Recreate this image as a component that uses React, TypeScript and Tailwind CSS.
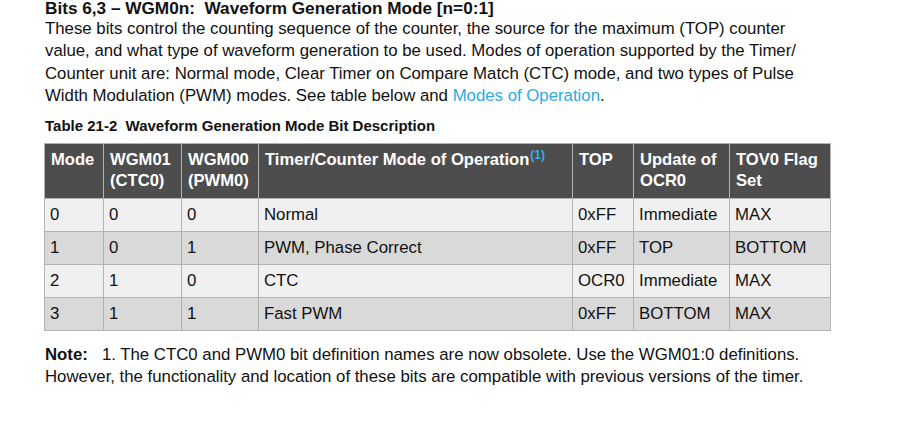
import React from "react";

const rows = [
  ["0", "0", "0", "Normal", "0xFF", "Immediate", "MAX"],
  ["1", "0", "1", "PWM, Phase Correct", "0xFF", "TOP", "BOTTOM"],
  ["2", "1", "0", "CTC", "OCR0", "Immediate", "MAX"],
  ["3", "1", "1", "Fast PWM", "0xFF", "BOTTOM", "MAX"],
];

export default function App() {
  return (
    <div
      className="w-[897px] h-[427px] bg-white text-[#111] overflow-hidden pl-[45px]"
      style={{ fontFamily: '"Liberation Sans", Arial, sans-serif' }}
    >
      <div className="text-[17.2px] font-bold leading-[17px]">
        Bits 6,3 – WGM0n:&nbsp; Waveform Generation Mode [n=0:1]
      </div>
      <p className="text-[16.8px] leading-[22.3px] mt-[1px] w-[800px]">
        These bits control the counting sequence of the counter, the source for the maximum (TOP) counter
        <br />
        value, and what type of waveform generation to be used. Modes of operation supported by the Timer/
        <br />
        Counter unit are: Normal mode, Clear Timer on Compare Match (CTC) mode, and two types of Pulse
        <br />
        Width Modulation (PWM) modes. See table below and{" "}
        <span className="text-[#2eaae2]">Modes of Operation</span>.
      </p>
      <div className="text-[15px] font-bold leading-[16px] mt-[11px]">
        Table 21-2&nbsp; Waveform Generation Mode Bit Description
      </div>
      <table className="-ml-[1px] mt-[9px] border-collapse table-fixed w-[786px] text-[16.8px]">
        <colgroup>
          <col className="w-[59px]" />
          <col className="w-[78px]" />
          <col className="w-[77px]" />
          <col className="w-[314px]" />
          <col className="w-[61px]" />
          <col className="w-[96px]" />
          <col className="w-[101px]" />
        </colgroup>
        <thead>
          <tr className="bg-[#4d4d4d] text-white h-[55px]">
            {[
              <>Mode</>,
              <>WGM01<br />(CTC0)</>,
              <>WGM00<br />(PWM0)</>,
              <>
                Timer/Counter Mode of Operation
                <span className="text-[#3aaee6] text-[12px] font-bold relative -top-[6px] ml-[1px]">(1)</span>
              </>,
              <>TOP</>,
              <>Update of<br />OCR0</>,
              <>TOV0 Flag<br />Set</>,
            ].map((c, i) => (
              <th
                key={i}
                className="border border-[#b3b3b3] align-top text-left font-bold text-[16.6px] leading-[21px] pl-[6px] pt-[5px] pb-[4px] whitespace-nowrap"
              >
                {c}
              </th>
            ))}
          </tr>
        </thead>
        <tbody>
          {rows.map((r, ri) => (
            <tr key={ri} className={ri % 2 === 0 ? "bg-[#f0f0f0] h-[33px]" : "bg-[#d9d9d9] h-[33px]"}>
              {r.map((c, ci) => (
                <td key={ci} className="border border-[#b3b3b3] pl-[5px] leading-[20px] whitespace-nowrap">
                  {c}
                </td>
              ))}
            </tr>
          ))}
        </tbody>
      </table>
      <p className="text-[16.8px] leading-[22.3px] mt-[13px] whitespace-nowrap">
        <b>Note:</b>
        <span className="inline-block w-[14px]" />
        1. The CTC0 and PWM0 bit definition names are now obsolete. Use the WGM01:0 definitions.
        <br />
        However, the functionality and location of these bits are compatible with previous versions of the timer.
      </p>
    </div>
  );
}
